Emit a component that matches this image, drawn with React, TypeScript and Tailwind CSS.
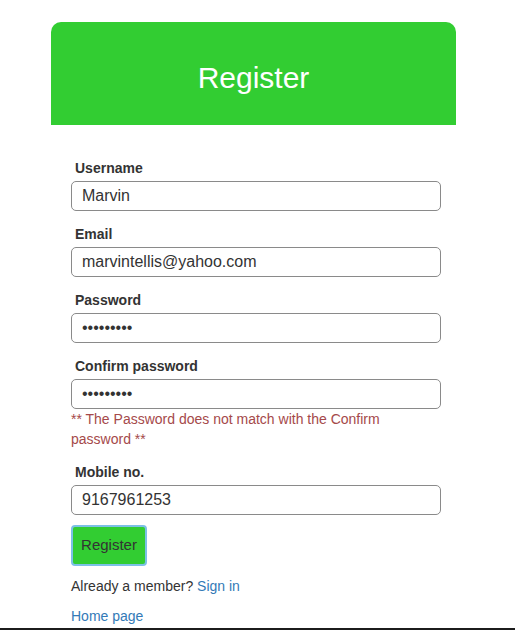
const fields = [
  { label: 'Username', value: 'Marvin' },
  { label: 'Email', value: 'marvintellis@yahoo.com' },
  { label: 'Password', value: '•••••••••' },
  { label: 'Confirm password', value: '•••••••••', error: true },
  { label: 'Mobile no.', value: '9167961253' },
];

function Field({ label, value, error }: { label: string; value: string; error?: boolean }) {
  return (
    <div>
      <label className="block pl-[4px] text-[14px] leading-[20px] font-bold text-[#333] mb-[3px]">{label}</label>
      <input
        type="text"
        readOnly
        value={value}
        className="block w-[370px] h-[30px] px-[10px] text-[16px] text-[#333] bg-white border border-[#8a8a8a] rounded-[5px] outline-none"
      />
      {error && (
        <p className="text-[14px] leading-[20px] text-[#a5494a] pr-[50px]">
          ** The Password does not match with the Confirm password **
        </p>
      )}
    </div>
  );
}

export default function App() {
  return (
    <div className="h-[630px] bg-white border-b-2 border-[#1c1c1c] font-['Liberation_Sans',Arial,sans-serif] text-[#333]">
      <div className="ml-[51px] w-[405px] pt-[22px]">
        <div className="h-[103px] bg-[#32cd32] rounded-t-[10px] text-center text-white text-[30px] leading-[34px] pt-[39px]">
          Register
        </div>
        <form className="pl-[20px] pt-[33px]" onSubmit={e => e.preventDefault()}>
          <div className="flex flex-col gap-[13px]">
            {fields.map(f => (
              <Field key={f.label} {...f} />
            ))}
          </div>
          <button
            type="submit"
            className="mt-[10px] block w-[76px] h-[41px] bg-[#32cd32] text-[#333] text-[15px] rounded-[4px] border-2 border-[#7cc0e6]"
          >
            Register
          </button>
          <p className="mt-[10px] text-[14px] leading-[20px]">
            Already a member? <a href="#" className="text-[#337ab7]">Sign in</a>
          </p>
          <p className="mt-[10px] text-[14px] leading-[20px]">
            <a href="#" className="text-[#337ab7]">Home page</a>
          </p>
        </form>
      </div>
    </div>
  );
}
